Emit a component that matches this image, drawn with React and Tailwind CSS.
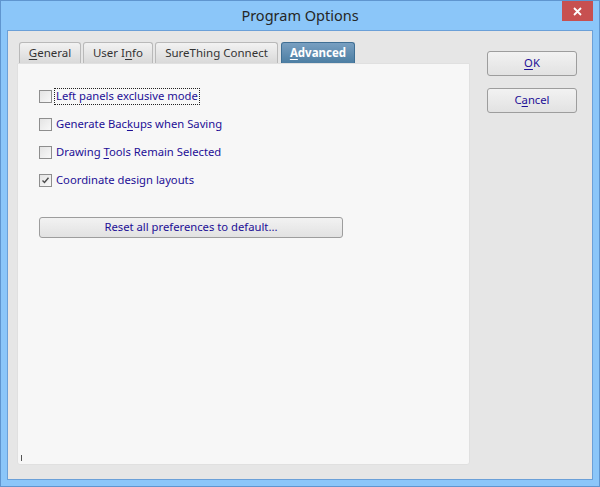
import React from "react";

const font = { fontFamily: '"Noto Sans", "Open Sans", "DejaVu Sans", sans-serif' };

function U({ children }) {
  return <span className="underline underline-offset-2">{children}</span>;
}

function Tab({ w, active, children, className = "" }) {
  if (active) {
    return (
      <div
        className={`h-[21px] ${w} ${className} rounded-t-[3px] border border-b-0 border-[#3f6f94] bg-gradient-to-b from-[#789fc1] to-[#4c7ea3] flex items-center justify-center text-[11.5px] font-bold text-white`}
      >
        <span>{children}</span>
      </div>
    );
  }
  return (
    <div
      className={`h-[21px] ${w} ${className} rounded-t-[3px] border border-b-0 border-[#b9b9b9] bg-gradient-to-b from-[#f2f2f2] to-[#d9d9d9] flex items-center justify-center text-[11.5px] text-[#333]`}
    >
      <span>{children}</span>
    </div>
  );
}

function Check({ checked, focus, children }) {
  return (
    <div className="flex items-center h-[15px]">
      <div className="w-[13px] h-[13px] border border-[#8e8e8e] bg-gradient-to-br from-[#e4e4e4] to-[#f8f8f8] flex items-center justify-center">
        {checked && (
          <svg width="9" height="9" viewBox="0 0 9 9">
            <path d="M1.5 4.5 L3.5 6.5 L7.5 1.8" fill="none" stroke="#4a4a4a" strokeWidth="1.4" />
          </svg>
        )}
      </div>
      <div
        className={`ml-[3px] px-[1px] h-[15px] flex items-center text-[11.25px] text-[#1d0f96] ${
          focus ? "outline outline-1 outline-dotted outline-[#222]" : ""
        }`}
      >
        <span>{children}</span>
      </div>
    </div>
  );
}

function Btn({ className = "", children }) {
  return (
    <div
      className={`rounded-[3px] border border-[#9d9d9d] bg-gradient-to-b from-[#f2f2f2] to-[#e2e2e2] flex items-center justify-center text-[11.25px] text-[#1d0f96] ${className}`}
    >
      <span>{children}</span>
    </div>
  );
}

export default function App() {
  return (
    <div
      style={font}
      className="w-[600px] h-[487px] bg-[#8bc6f9] border border-[#5f95cf] flex flex-col overflow-hidden"
    >
      <div className="h-[29px] relative flex items-center justify-center">
        <span className="text-[14.5px] text-[#262626]">Program Options</span>
        <div className="absolute right-[6px] top-0 w-[31px] h-[20px] bg-[#c75050] flex items-center justify-center">
          <svg width="9" height="9" viewBox="0 0 9 9">
            <path d="M1 1 L8 8 M8 1 L1 8" stroke="white" strokeWidth="1.8" />
          </svg>
        </div>
      </div>
      <div className="mx-[6px] mb-[6px] flex-1 border border-[#6ba0d8] bg-[#e6e6e6] flex pl-[9px] pt-[11px]">
        <div className="w-[453px] flex flex-col">
          <div className="flex pl-[2px]">
            <Tab w="w-[62px]">
              <U>G</U>eneral
            </Tab>
            <Tab w="w-[70px]" className="ml-[2px]">
              User I<U>n</U>fo
            </Tab>
            <Tab w="w-[123px]" className="ml-[2px]">
              SureThing Connect
            </Tab>
            <Tab w="w-[74px]" active className="ml-[3px]">
              <U>A</U>dvanced
            </Tab>
          </div>
          <div className="h-[402px] bg-[#f7f7f7] border border-[#e0e0e0] rounded-b-[3px] pl-[21px] pt-[25px] flex flex-col relative">
            <div className="flex flex-col gap-[13px]">
              <Check focus>Left panels exclusive mode</Check>
              <Check>
                <>Generate Bac<U>k</U>ups when Saving</>
              </Check>
              <Check>
                <>Drawing{" "}<U>T</U>ools Remain Selected</>
              </Check>
              <Check checked>Coordinate design layouts</Check>
            </div>
            <Btn className="mt-[29px] w-[304px] h-[21px]">Reset all preferences to default...</Btn>
            <div className="absolute left-[3px] bottom-[3px] w-px h-[6px] bg-[#555]" />
          </div>
        </div>
        <div className="ml-[17px] mt-[9px] flex flex-col gap-[12px]">
          <Btn className="w-[90px] h-[25px]">
            <U>O</U>K
          </Btn>
          <Btn className="w-[90px] h-[25px]">
            C<U>a</U>ncel
          </Btn>
        </div>
      </div>
    </div>
  );
}
